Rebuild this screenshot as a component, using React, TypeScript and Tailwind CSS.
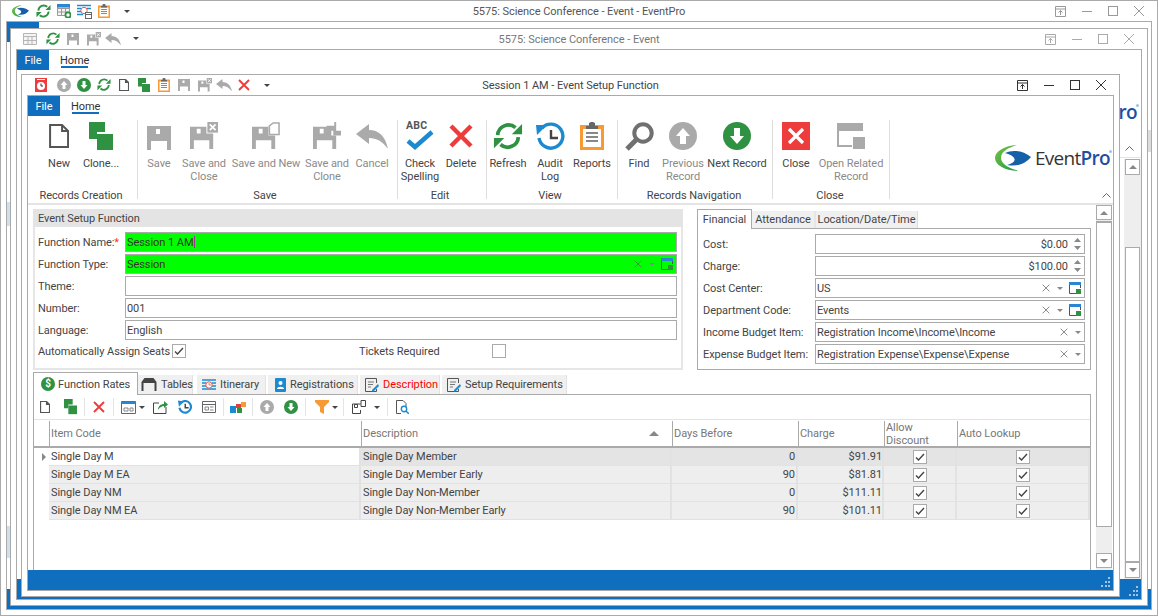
import type { ReactNode } from "react";

const GRAY = "#aaaaaa";
const GREEN = "#2f9142";
const RED = "#ee3b3b";
const ORANGE = "#f79a36";
const BLUE = "#1c8ad0";

function Svg({ w, h = w, vb, children }: { w: number; h?: number; vb: string; children: ReactNode }) {
  return (
    <svg width={w} height={h} viewBox={vb} className="block shrink-0">
      {children}
    </svg>
  );
}

function Swoosh({ w }: { w: number }) {
  return (
    <Svg w={w} h={(w * 26) / 36} vb="0 0 36 26">
      <defs>
        <linearGradient id="swg" x1="0" y1="0" x2="1" y2="1">
          <stop offset="0" stopColor="#7cc242" />
          <stop offset="1" stopColor="#149a47" />
        </linearGradient>
      </defs>
      <path d="M22 0 C8 1 0 7 0 13 C0 20 10 26 25 26 C13 24 6 18 6 13 C6 7 12 3 22 0Z" fill="url(#swg)" />
      <path d="M10 8 C18 4 29 6 36 12 C31 18 24 22 12 20 C21 18 24 12 10 8Z" fill="#1560a8" />
    </Svg>
  );
}

function Logo() {
  return (
    <div className="flex items-center gap-[4px]">
      <Swoosh w={36} />
      <span className="relative text-[19px] leading-[26px] tracking-[-0.7px] text-[#333333] [font-family:'Open_Sans',sans-serif]">
        Event<span className="font-semibold text-[#1f4f9f]">Pro</span>
        <span className="absolute -right-[2px] top-[5px] size-[3px] rounded-full bg-[#9cc3e4]" />
      </span>
    </div>
  );
}

function NewDoc({ s = 24, c = "#555555" }: { s?: number; c?: string }) {
  return (
    <Svg w={s * 0.84} h={s} vb="0 0 20 24">
      <path d="M1 1H13L19 7V23H1Z M13 1V7H19" fill="#fff" stroke={c} strokeWidth={s > 16 ? 2 : 2.4} />
    </Svg>
  );
}

function Clone({ s = 24, c = GREEN }: { s?: number; c?: string }) {
  return (
    <Svg w={s} h={(s * 28) / 24} vb="0 0 24 28">
      <path d="M0 0H16V10H8V17H0Z" fill={c} />
      <rect x="8" y="12" width="16" height="16" fill={c} />
    </Svg>
  );
}

function Floppy({ s = 24, c = GRAY }: { s?: number; c?: string }) {
  return (
    <Svg w={s} vb="0 0 24 24">
      <path fillRule="evenodd" d="M0 0H24V24H0Z M9 3V8H13V3Z M4 15V24H20V15Z" fill={c} />
    </Svg>
  );
}

function FloppyX({ s = 28, c = GRAY }: { s?: number; c?: string }) {
  return (
    <Svg w={s} h={(s * 28) / 29} vb="0 0 29 28">
      <path fillRule="evenodd" d="M0 5H17V12H24V28H0Z M7 7V12H11V7Z M4 19V28H20V19Z" fill={c} />
      <rect x="18" y="0" width="11" height="11" fill={c} />
      <path d="M20.5 2.5L26.5 8.5M26.5 2.5L20.5 8.5" stroke="#fff" strokeWidth="1.8" />
    </Svg>
  );
}

function FloppyNew({ s = 28 }: { s?: number }) {
  return (
    <Svg w={s} h={(s * 28) / 29} vb="0 0 29 28">
      <path fillRule="evenodd" d="M0 5H17V14H24V28H0Z M7 7V12H11V7Z M4 19V28H20V19Z" fill={GRAY} />
      <path d="M18 4L22 1H28V13H18Z" fill="#fff" stroke={GRAY} strokeWidth="1.6" />
    </Svg>
  );
}

function FloppyClone({ s = 28 }: { s?: number }) {
  return (
    <Svg w={s} h={(s * 28) / 29} vb="0 0 29 28">
      <path fillRule="evenodd" d="M0 5H19V14H24V28H0Z M7 7V12H11V7Z M4 19V28H20V19Z" fill={GRAY} />
      <path d="M14 4H22V0H24V9H29V14H21V9H14Z" fill={GRAY} />
    </Svg>
  );
}

function Back({ s = 32, c = GRAY }: { s?: number; c?: string }) {
  return (
    <Svg w={s} h={s * 0.78} vb="0 0 32 25">
      <path d="M0 10L13 0V6C24 6 30 14 32 25C27 18 21 14 13 14V20Z" fill={c} />
    </Svg>
  );
}

function Refresh({ s = 30 }: { s?: number }) {
  return (
    <Svg w={s} h={s * 0.94} vb="0 0 32 30">
      <path d="M5 14A11.5 11.5 0 0 1 24 6M27 16A11.5 11.5 0 0 1 8 24" fill="none" stroke={GREEN} strokeWidth="4" />
      <path d="M31 2V13H20ZM1 28V17H12Z" fill={GREEN} />
    </Svg>
  );
}

function Audit() {
  return (
    <Svg w={29} vb="0 0 29 29">
      <path d="M6 6A12 12 0 1 1 3 16" fill="none" stroke={BLUE} strokeWidth="3.4" />
      <path d="M0 3L11 3L1 13Z" fill={BLUE} />
      <path d="M15 8V16H22" fill="none" stroke="#444444" strokeWidth="2.4" />
    </Svg>
  );
}

function Clipboard({ w = 24, h = 28 }: { w?: number; h?: number }) {
  return (
    <Svg w={w} h={h} vb="0 0 24 28">
      <path fillRule="evenodd" d="M0 3H24V28H0Z M3 7V25H21V7Z" fill={ORANGE} />
      <path d="M6 4H9V1L11 0H13L15 1V4H18V7H6Z" fill="#666666" />
      <path d="M6 11H18M6 15H18M6 19H18" stroke="#888888" strokeWidth="2" />
    </Svg>
  );
}

function Magnifier() {
  return (
    <Svg w={29} vb="0 0 29 29">
      <circle cx="18" cy="11" r="8.7" fill="none" stroke="#707070" strokeWidth="4" />
      <path d="M11 18L2 27" stroke="#707070" strokeWidth="5" />
    </Svg>
  );
}

function CircleArrow({ s, c, up }: { s: number; c: string; up?: boolean }) {
  return (
    <Svg w={s} vb="0 0 28 28">
      <circle cx="14" cy="14" r="14" fill={c} />
      <path d={up ? "M14 6L21 14H17V22H11V14H7Z" : "M14 22L21 14H17V6H11V14H7Z"} fill="#fff" />
    </Svg>
  );
}

function Cross({ s, c = RED, sw = 3 }: { s: number; c?: string; sw?: number }) {
  return (
    <Svg w={s} vb="0 0 12 12">
      <path d="M1 1L11 11M11 1L1 11" stroke={c} strokeWidth={sw} />
    </Svg>
  );
}

function CheckSpelling() {
  return (
    <div className="relative h-[28px] w-[30px]">
      <span className="absolute left-[1px] -top-[3px] text-[10.5px] font-bold leading-[14px] tracking-[0.2px] text-[#555555]">ABC</span>
      <div className="absolute left-0 top-[8px]">
        <Svg w={30} h={20} vb="0 0 30 20">
          <path d="M3 11L10 17L27 2" fill="none" stroke={BLUE} strokeWidth="4.5" />
        </Svg>
      </div>
    </div>
  );
}

function CloseSquare() {
  return (
    <Svg w={28} vb="0 0 28 28">
      <rect width="28" height="28" fill={RED} />
      <path d="M7 7L21 21M21 7L7 21" stroke="#fff" strokeWidth="3.2" />
    </Svg>
  );
}

function OpenRelated() {
  return (
    <Svg w={28} h={26} vb="0 0 28 26">
      <path fillRule="evenodd" d="M0 0H26V8H24H2V22H15V24H0Z" fill={GRAY} />
      <rect x="16" y="14" width="12" height="12" fill={GRAY} />
    </Svg>
  );
}

function DropCaret() {
  return (
    <Svg w={6} h={3} vb="0 0 6 3">
      <path d="M0 0H6L3 3Z" fill="#444444" />
    </Svg>
  );
}

function ClearDrop({ lookup, c = "#777777" }: { lookup?: boolean; c?: string }) {
  return (
    <div className="flex items-center">
      <Cross s={8} c={c} sw={1.3} />
      <div className="ml-[7px]">
        <Svg w={6} h={3} vb="0 0 6 3">
          <path d="M0 0H6L3 3Z" fill="#888888" />
        </Svg>
      </div>
      {lookup && (
        <div className="ml-[6px]">
          <Svg w={12} vb="0 0 12 12">
            <path d="M.5 3V11.5H7" fill="none" stroke="#555555" />
            <path d="M11.5 3V6" stroke="#555555" />
            <rect width="12" height="3" fill="#2a86d3" />
            <rect x="7" y="7" width="5" height="5" fill={GREEN} />
          </Svg>
        </div>
      )}
    </div>
  );
}

function Spin() {
  return (
    <Svg w={7} h={12} vb="0 0 7 12">
      <path d="M0 4L3.5 0L7 4Z M0 8L3.5 12L7 8Z" fill="#888888" />
    </Svg>
  );
}

function WinControls({ c }: { c: string }) {
  return (
    <div className="flex items-center justify-end gap-[16px] pr-[13px]">
      <Svg w={11} vb="0 0 11 11">
        <path d="M.5.5H10.5V10.5H.5Z M.5 3H10.5 M5.5 9V4.5 M3.5 6.5L5.5 4.5L7.5 6.5" fill="none" stroke={c} />
      </Svg>
      <Svg w={10} vb="0 0 10 10">
        <path d="M0 5.5H10" stroke={c} />
      </Svg>
      <Svg w={10} vb="0 0 10 10">
        <rect x=".5" y=".5" width="9" height="9" fill="none" stroke={c} />
      </Svg>
      <Svg w={10} vb="0 0 10 10">
        <path d="M0 0L10 10M10 0L0 10" stroke={c} />
      </Svg>
    </div>
  );
}

function TitleBar({ left, title, titleColor, ctl }: { left: ReactNode; title: string; titleColor: string; ctl: string }) {
  return (
    <div className="grid h-[20px] shrink-0 grid-cols-[1fr_auto_1fr] items-center">
      <div className="flex items-center">{left}</div>
      <div className={"pt-px " + titleColor}>{title}</div>
      <WinControls c={ctl} />
    </div>
  );
}

function TabStrip() {
  return (
    <div className="flex h-[20px] shrink-0 items-start">
      <div className="flex h-[20px] w-[32px] items-center justify-center bg-[#106ebe] pt-px text-white">File</div>
      <div className="ml-[10px] flex h-[20px] flex-col items-center px-[1px] pt-px">
        <span className="leading-[19px] text-[#333333]">Home</span>
        <span className="-mt-[4px] h-[2px] w-[27px] bg-[#106ebe]" />
      </div>
    </div>
  );
}

function RibbonBtn({ w, icon, lines, off }: { w: string; icon: ReactNode; lines: string[]; off?: boolean }) {
  return (
    <div className={"flex h-[68px] flex-col items-center " + w}>
      <div className="flex h-[32px] items-center justify-center">{icon}</div>
      <div className={"mt-[5px] whitespace-nowrap text-center leading-[13px] " + (off ? "text-[#8a8a8a]" : "text-[#444444]")}>
        {lines.map((l) => (
          <div key={l}>{l}</div>
        ))}
      </div>
    </div>
  );
}

function RibbonGroup({ w, pr, label, children }: { w: string; pr: string; label: string; children: ReactNode }) {
  return (
    <>
      <div className={"flex shrink-0 flex-col " + w}>
        <div className="flex">{children}</div>
        <div className={"whitespace-nowrap pt-px text-center leading-[14px] text-[#444444] " + pr}>{label}</div>
      </div>
      <div className="h-[79px] w-px shrink-0 bg-[#dddddd]" />
    </>
  );
}

function Ribbon() {
  return (
    <div className="relative flex h-[87px] shrink-0 pt-[4px]">
      <RibbonGroup w="w-[109px] pl-[10px]" pr="-ml-[10px] pr-[3px]" label="Records Creation">
        <RibbonBtn w="w-[42px]" icon={<NewDoc s={24} />} lines={["New"]} />
        <RibbonBtn w="w-[42px]" icon={<Clone s={24} />} lines={["Clone..."]} />
      </RibbonGroup>
      <RibbonGroup w="w-[259px]" pr="pr-[5px]" label="Save">
        <RibbonBtn w="w-[42px]" off icon={<div className="mt-[4px]"><Floppy /></div>} lines={["Save"]} />
        <RibbonBtn w="w-[48px]" off icon={<FloppyX />} lines={["Save and", "Close"]} />
        <RibbonBtn w="w-[76px]" off icon={<FloppyNew />} lines={["Save and New"]} />
        <RibbonBtn w="w-[46px]" off icon={<FloppyClone />} lines={["Save and", "Clone"]} />
        <RibbonBtn w="w-[44px]" off icon={<Back />} lines={["Cancel"]} />
      </RibbonGroup>
      <RibbonGroup w="w-[88px]" pr="pr-[4px]" label="Edit">
        <RibbonBtn w="w-[44px]" icon={<CheckSpelling />} lines={["Check", "Spelling"]} />
        <RibbonBtn w="w-[38px]" icon={<Cross s={24} sw={2.2} />} lines={["Delete"]} />
      </RibbonGroup>
      <RibbonGroup w="w-[130px]" pr="pr-[4px]" label="View">
        <RibbonBtn w="w-[42px]" icon={<Refresh />} lines={["Refresh"]} />
        <RibbonBtn w="w-[42px]" icon={<Audit />} lines={["Audit", "Log"]} />
        <RibbonBtn w="w-[42px]" icon={<Clipboard />} lines={["Reports"]} />
      </RibbonGroup>
      <RibbonGroup w="w-[154px]" pr="pr-[2px]" label="Records Navigation">
        <RibbonBtn w="w-[42px]" icon={<Magnifier />} lines={["Find"]} />
        <RibbonBtn w="w-[46px]" off icon={<CircleArrow s={28} c={GRAY} up />} lines={["Previous", "Record"]} />
        <RibbonBtn w="w-[62px]" icon={<CircleArrow s={28} c={GREEN} />} lines={["Next Record"]} />
      </RibbonGroup>
      <RibbonGroup w="w-[116px]" pr="pr-[2px]" label="Close">
        <RibbonBtn w="w-[46px]" icon={<CloseSquare />} lines={["Close"]} />
        <RibbonBtn w="w-[64px]" off icon={<OpenRelated />} lines={["Open Related", "Record"]} />
      </RibbonGroup>
      <div className="absolute right-[3px] top-[29px]">
        <Logo />
      </div>
      <div className="absolute right-[2px] bottom-[5px]">
        <Chevron />
      </div>
    </div>
  );
}

function Chevron() {
  return (
    <Svg w={9} h={5} vb="0 0 9 5">
      <path d="M.5 4.5L4.5 .5L8.5 4.5" fill="none" stroke="#666666" />
    </Svg>
  );
}

function Field({ value, green, right, align, caret }: { value?: string; green?: boolean; right?: ReactNode; align?: boolean; caret?: boolean }) {
  return (
    <div
      className={
        "flex h-[20px] min-w-0 flex-1 items-center border border-[#aaaaaa] px-[1px] " +
        (green ? "bg-[#00ff00] text-[#333333]" : "bg-white text-[#444444]")
      }
    >
      <span className={"truncate pt-px " + (align ? "flex-1 text-right" : caret ? "" : "flex-1")}>{value}</span>
      {caret && <span className="ml-[1px] h-[12px] w-px bg-[#a02fa0]" />}
      {right && <div className="ml-[6px] flex items-center pr-[2px]">{right}</div>}
    </div>
  );
}

function Check({ on }: { on?: boolean }) {
  return (
    <div className="flex size-[14px] shrink-0 items-center justify-center border border-[#aaaaaa] bg-white">
      {on && (
        <Svg w={10} h={8} vb="0 0 10 8">
          <path d="M1 4.5L3.5 7L9 1" fill="none" stroke="#444444" strokeWidth="1.4" />
        </Svg>
      )}
    </div>
  );
}

function SetupGroup() {
  const rows: [string, ReactNode][] = [
    [
      "Function Name:",
      <Field key="a" green caret value="Session 1 AM" />,
    ],
    [
      "Function Type:",
      <Field key="b" green value="Session" right={<ClearDrop lookup c="#3d8a3d" />} />,
    ],
    ["Theme:", <Field key="c" />],
    ["Number:", <Field key="d" value="001" />],
    ["Language:", <Field key="e" value="English" />],
  ];
  return (
    <div className="h-[161px] w-[650px] shrink-0 border-2 border-t-0 border-[#e6e6e6]">
      <div className="-mx-[2px] flex h-[18px] items-center bg-[#e4e4e4] pt-px pl-[5px] text-[#444444]">Event Setup Function</div>
      <div className="flex flex-col gap-[2px] pt-[5px] pr-[4px] pl-[3px]">
        {rows.map(([label, field], i) => (
          <div key={label} className="flex items-center">
            <span className="w-[87px] shrink-0 whitespace-nowrap pt-px text-[#444444]">
              {label}
              {i === 0 && <span className="text-[#ee3b3b]">*</span>}
            </span>
            {field}
          </div>
        ))}
        <div className="flex h-[18px] items-center text-[#444444]">
          <span className="w-[134px] shrink-0 whitespace-nowrap pt-px">Automatically Assign Seats</span>
          <Check on />
          <span className="ml-[173px] w-[133px] shrink-0 pt-px">Tickets Required</span>
          <Check />
        </div>
      </div>
    </div>
  );
}

function FinancialPanel() {
  const rows: [string, ReactNode][] = [
    ["Cost:", <Field key="a" value="$0.00" align right={<Spin />} />],
    ["Charge:", <Field key="b" value="$100.00" align right={<Spin />} />],
    ["Cost Center:", <Field key="c" value="US" right={<ClearDrop lookup />} />],
    ["Department Code:", <Field key="d" value="Events" right={<ClearDrop lookup />} />],
    ["Income Budget Item:", <Field key="e" value="Registration Income\Income\Income" right={<ClearDrop />} />],
    ["Expense Budget Item:", <Field key="f" value="Registration Expense\Expense\Expense" right={<ClearDrop />} />],
  ];
  return (
    <div className="ml-[14px] flex w-[394px] shrink-0 flex-col">
      <div className="flex h-[19px] items-end text-[#444444]">
        <div className="z-10 -mb-px flex h-[20px] w-[55px] items-center justify-center border border-b-0 border-[#aaaaaa] bg-white">Financial</div>
        <div className="flex h-[17px] w-[64px] items-center justify-center border-r-2 border-[#e6e6e6] bg-[#f0f0f0]">Attendance</div>
        <div className="flex h-[17px] w-[102px] items-center justify-center border-r border-[#dddddd] bg-[#f0f0f0]">Location/Date/Time</div>
      </div>
      <div className="flex h-[142px] flex-col gap-[2px] border border-[#aaaaaa] px-[5px] pt-[5px]">
        {rows.map(([label, field]) => (
          <div key={label} className="flex items-center">
            <span className="w-[112px] shrink-0 whitespace-nowrap pt-px text-[#444444]">{label}</span>
            {field}
          </div>
        ))}
      </div>
    </div>
  );
}

function DocPen() {
  return (
    <Svg w={14} vb="0 0 14 14">
      <path d="M.5.5H11.5V5M11.5 11V13.5H.5V.5" fill="none" stroke="#555555" />
      <path d="M3 4H9M3 6.5H8M3 9H6" stroke="#777777" />
      <path d="M7 12L13 6L14 8L8.5 13.5H7Z" fill={BLUE} />
    </Svg>
  );
}

function ItinIcon({ s = 14 }: { s?: number }) {
  return (
    <Svg w={s} vb="0 0 14 14">
      <path d="M0 2H14M0 5H4M0 8H4M0 11H14M10 5H14M10 8H14" stroke={BLUE} strokeWidth="1.4" />
      <circle cx="7" cy="7" r="3.2" fill="#fff" stroke="#e8594f" />
      <path d="M7 5V7H9" fill="none" stroke="#e8594f" strokeWidth=".8" />
    </Svg>
  );
}

function GridGear() {
  return (
    <Svg w={14} h={14} vb="0 0 14 14">
      <path d="M.5.5H12.5V11.5H.5Z M.5 4.5H12.5 M4.5 4.5V11.5 M8.5 4.5V11.5 M.5 8H12.5" fill="#f4f4f4" stroke="#999999" />
      <rect x="0" y="0" width="13" height="3.5" fill="#2a86d3" />
      <circle cx="11" cy="11" r="2.6" fill="#fff" stroke={GREEN} strokeWidth="1.8" />
    </Svg>
  );
}

function ItinCal() {
  return (
    <Svg w={15} h={15} vb="0 0 15 15">
      <path d="M0 1.5H14M0 4.5H4M0 7.5H4M0 10.5H6M10 4.5H14" stroke={BLUE} strokeWidth="1.4" />
      <circle cx="7" cy="6.5" r="3.2" fill="#fff" stroke="#e8594f" />
      <rect x="8.5" y="8.5" width="6" height="6" fill="#fff" stroke="#666666" />
      <path d="M8.5 10.5H14.5" stroke="#666666" />
    </Svg>
  );
}

function BottomTab({ w, ml, icon, label, red }: { w: string; ml: string; icon: ReactNode; label: string; red?: boolean }) {
  return (
    <div className={"flex h-[19px] shrink-0 items-center gap-[4px] border-r border-[#e2e2e2] bg-[#f0f0f0] pl-[5px] " + w + " " + ml}>
      {icon}
      <span className={"whitespace-nowrap " + (red ? "text-[#ff0000]" : "text-[#444444]")}>{label}</span>
    </div>
  );
}

function TabsRow() {
  return (
    <div className="mt-[2px] flex h-[22px] shrink-0 items-end">
      <div className="z-10 -mb-px flex h-[23px] w-[105px] shrink-0 items-center gap-[3px] whitespace-nowrap border border-b-0 border-[#aaaaaa] bg-white pl-[7px] text-[#444444]">
        <span className="flex size-[14px] items-center justify-center rounded-full bg-[#2f9142] text-[10px] font-bold leading-none text-white">$</span>
        <span className="pt-px">Function Rates</span>
      </div>
      <BottomTab
        w="w-[55px]"
        ml="ml-0"
        icon={
          <div className="-ml-[2px]">
            <Svg w={16} h={13} vb="0 0 15 13">
              <path d="M3 0H12L15 4V13H13V5H2V13H0V4Z" fill="#444444" />
            </Svg>
          </div>
        }
        label="Tables"
      />
      <BottomTab w="w-[69px]" ml="ml-[4px]" icon={<ItinIcon />} label="Itinerary" />
      <BottomTab
        w="w-[90px]"
        ml="ml-[2px]"
        icon={
          <div className="ml-[2px]">
            <Svg w={11} h={14} vb="0 0 11 14">
              <rect width="11" height="14" rx="1" fill={BLUE} />
              <circle cx="5.5" cy="5" r="2" fill="#fff" />
              <path d="M2 11C2 8 9 8 9 11Z" fill="#fff" />
            </Svg>
          </div>
        }
        label="Registrations"
      />
      <BottomTab w="w-[80px]" ml="ml-[2px]" icon={<DocPen />} label="Description" red />
      <BottomTab w="w-[125px]" ml="ml-[2px]" icon={<DocPen />} label="Setup Requirements" />
    </div>
  );
}

function Sep({ ml }: { ml: string }) {
  return <div className={"h-[18px] w-px shrink-0 bg-[#e4e4e4] " + ml} />;
}

function GridToolbar() {
  return (
    <div className="flex h-[25px] shrink-0 items-center border-b border-[#e3e3e3]">
      <div className="ml-[6px]"><NewDoc s={12} /></div>
      <div className="ml-[14px]"><Clone s={13} /></div>
      <Sep ml="ml-[7px]" />
      <div className="ml-[8px]"><Cross s={12} sw={1.9} /></div>
      <Sep ml="ml-[8px]" />
      <div className="ml-[7px]">
        <Svg w={15} h={13} vb="0 0 15 13">
          <path d="M.5.5H14.5V12.5H.5Z" fill="none" stroke="#666666" />
          <rect x=".5" y=".5" width="14" height="2.5" fill="#2a86d3" />
          <path d="M3 7H7V10H3ZM9 7H12V10H9Z" fill="none" stroke="#888888" />
        </Svg>
      </div>
      <div className="ml-[3px]"><DropCaret /></div>
      <div className="ml-[8px]">
        <Svg w={15} h={13} vb="0 0 15 13">
          <path d="M6 2H.5V12.5H13V6" fill="none" stroke="#444444" />
          <path d="M5 9C5 5 8 3 11 3V0L15 3.5L11 7V5C9 5 7 6 5 9Z" fill={GREEN} />
        </Svg>
      </div>
      <div className="ml-[10px]">
        <Svg w={14} vb="0 0 29 29">
          <path d="M6 6A12 12 0 1 1 3 16" fill="none" stroke={BLUE} strokeWidth="4.5" />
          <path d="M0 1L12 3L2 14Z" fill={BLUE} />
          <path d="M15 8V16H22" fill="none" stroke="#444444" strokeWidth="3" />
        </Svg>
      </div>
      <div className="ml-[10px]">
        <Svg w={14} h={12} vb="0 0 14 12">
          <path d="M.5.5H13.5V11.5H.5Z M.5 3.5H13.5" fill="none" stroke="#666666" />
          <path d="M3 6H6.5V9H3ZM8 6H11.5M8 9H11.5" fill="none" stroke="#888888" />
        </Svg>
      </div>
      <Sep ml="ml-[7px]" />
      <div className="ml-[6px]">
        <Svg w={16} h={11} vb="0 0 16 11">
          <path d="M0 4H6V11H0Z" fill={BLUE} />
          <path d="M6 2H11V6H6Z" fill="#d9433a" />
          <path d="M11 0H16V5H11Z" fill={ORANGE} />
          <path d="M7 6H12V11H7Z" fill={GREEN} />
        </Svg>
      </div>
      <Sep ml="ml-[6px]" />
      <div className="ml-[7px]"><CircleArrow s={14} c={GRAY} up /></div>
      <div className="ml-[10px]"><CircleArrow s={14} c={GREEN} /></div>
      <Sep ml="ml-[7px]" />
      <div className="ml-[9px]">
        <Svg w={14} vb="0 0 14 14">
          <path d="M0 0H14V2L9 7V14L5 12V7L0 2Z" fill={ORANGE} />
        </Svg>
      </div>
      <div className="ml-[3px]"><DropCaret /></div>
      <Sep ml="ml-[5px]" />
      <div className="ml-[8px]">
        <Svg w={14} vb="0 0 14 14">
          <path d="M.5 4V13.5H8.5V10M8.5 4H.5" fill="none" stroke="#444444" />
          <path d="M2.5 4.5H5.5V7.5H2.5Z M9 .5H13.5V6.5H9Z" fill="none" stroke="#444444" />
        </Svg>
      </div>
      <div className="ml-[8px]"><DropCaret /></div>
      <Sep ml="ml-[7px]" />
      <div className="ml-[8px]">
        <Svg w={13} h={14} vb="0 0 13 14">
          <path d="M.5.5H7L10 3.5V7M5 13.5H.5V.5" fill="none" stroke="#555555" />
          <circle cx="8" cy="9" r="2.7" fill="none" stroke={BLUE} strokeWidth="1.4" />
          <path d="M10 11L13 14" stroke={BLUE} strokeWidth="1.4" />
        </Svg>
      </div>
    </div>
  );
}

const rates = [
  ["Single Day M", "Single Day Member", "0", "$91.91"],
  ["Single Day M EA", "Single Day Member Early", "90", "$81.81"],
  ["Single Day NM", "Single Day Non-Member", "0", "$111.11"],
  ["Single Day NM EA", "Single Day Non-Member Early", "90", "$101.11"],
];

const COLS = "grid grid-cols-[15px_312px_311px_126px_86px_73px_133px]";

function HeadCell({ children, cls = "" }: { children: ReactNode; cls?: string }) {
  return (
    <div className={"flex items-center self-stretch leading-[13px] text-[#777777] " + cls}>
      <div className="flex h-[25px] w-full items-center border-l border-[#aaaaaa] pl-[1px]">{children}</div>
    </div>
  );
}

function RatesGrid() {
  return (
    <div className="min-h-0 flex-1 text-[#444444]">
      <div className={COLS + " h-[28px] border-b-2 border-[#aaaaaa]"}>
        <div />
        <HeadCell>Item Code</HeadCell>
        <HeadCell>
          <span className="flex-1">Description</span>
          <span className="mr-[13px] size-0 border-x-[5px] border-b-[5px] border-x-transparent border-b-[#888888]" />
        </HeadCell>
        <HeadCell>Days Before</HeadCell>
        <HeadCell>Charge</HeadCell>
        <HeadCell>
          <span className="pt-px">
            Allow
            <br />
            Discount
          </span>
        </HeadCell>
        <HeadCell>Auto Lookup</HeadCell>
      </div>
      {rates.map((r, i) => {
        const bg = i === 0 ? "bg-[#e4e4e4]" : "bg-[#eeeeee]";
        const cell = "flex h-[18px] items-center border-r-2 border-b-[1px] border-[#e2e2e2] ";
        return (
          <div key={r[0]} className={COLS}>
            <div className="flex h-[18px] items-center justify-center bg-white">
              {i === 0 && <span className="ml-[4px] size-0 border-y-[4px] border-l-[4px] border-y-transparent border-l-[#888888]" />}
            </div>
            <div className={cell + "pl-[2px] " + (i === 0 ? "bg-white" : bg)}>{r[0]}</div>
            <div className={cell + "pl-[2px] " + bg}>{r[1]}</div>
            <div className={cell + "justify-end pr-[1px] " + bg}>{r[2]}</div>
            <div className={cell + "justify-end " + bg}>{r[3]}</div>
            <div className={cell + "justify-center " + bg}><Check on /></div>
            <div className={cell + "justify-center " + bg}><Check on /></div>
          </div>
        );
      })}
    </div>
  );
}

function ScrollBar() {
  return (
    <div className="flex w-[16px] shrink-0 flex-col bg-[#eeeeee]">
      <div className="flex h-[15px] items-center justify-center border border-[#aaaaaa] bg-white">
        <span className="size-0 border-x-[4px] border-b-[4px] border-x-transparent border-b-[#888888]" />
      </div>
      <div className="mt-[1px] h-[306px] border border-t-2 border-[#aaaaaa] bg-white" />
      <div className="flex-1" />
      <div className="flex h-[15px] items-center justify-center border border-[#aaaaaa] bg-white">
        <span className="size-0 border-x-[4px] border-t-[4px] border-x-transparent border-t-[#888888]" />
      </div>
      <div className="h-[2px]" />
    </div>
  );
}

function StatusBar({ h = "h-[20px]" }: { h?: string }) {
  return (
    <div className={"flex shrink-0 items-end justify-end bg-[#106ebe] pr-[3px] pb-[3px] " + h}>
      <Svg w={10} h={10} vb="0 0 10 10">
        <path d="M8 0h2v2H8zM5 4h2v2H5zM8 4h2v2H8zM1 8h2v2H1zM5 8h2v2H5zM8 8h2v2H8z" fill="#9dc3e6" />
      </Svg>
    </div>
  );
}

function SessionWindow() {
  return (
    <div className="absolute left-[20px] top-[73px] flex h-[523px] w-[1099px] flex-col border border-[#aaaaaa] bg-white">
      <TitleBar
        title="Session 1 AM - Event Setup Function"
        titleColor="text-[#444444]"
        ctl="#333333"
        left={
          <>
            <div className="ml-[13px]">
              <Svg w={12} h={14} vb="0 0 12 14">
                <rect width="12" height="14" fill={RED} />
                <circle cx="6" cy="8" r="4" fill="#fff" />
                <path d="M6 5.5V8H8" fill="none" stroke="#333333" />
                <path d="M2 1.5H10" stroke="#fff" />
              </Svg>
            </div>
            <div className="ml-[10px]"><CircleArrow s={14} c={GRAY} up /></div>
            <div className="ml-[6px]"><CircleArrow s={14} c={GREEN} /></div>
            <div className="ml-[6px]"><Refresh s={14} /></div>
            <div className="ml-[8px]"><NewDoc s={12} /></div>
            <div className="ml-[9px]"><Clone s={12} /></div>
            <div className="ml-[8px]"><Clipboard w={12} h={14} /></div>
            <div className="ml-[8px]"><Floppy s={12} /></div>
            <div className="ml-[8px]"><FloppyX s={14} /></div>
            <div className="ml-[4px]"><Back s={16} /></div>
            <div className="ml-[6px]"><Cross s={12} sw={1.9} /></div>
            <div className="ml-[14px]"><DropCaret /></div>
          </>
        }
      />
      <div className="mx-[5px] mb-[5px] flex min-h-0 flex-1 flex-col border border-[#aaaaaa] bg-white">
        <TabStrip />
        <Ribbon />
        <div className="h-[2px] shrink-0 bg-[#e4e4e4]" />
        <div className="flex min-h-0 flex-1">
          <div className="flex w-[1068px] shrink-0 flex-col pt-[4px] pl-[5px]">
            <div className="flex shrink-0">
              <SetupGroup />
              <FinancialPanel />
            </div>
            <TabsRow />
            <div className="flex min-h-0 w-[1058px] flex-1 flex-col border-x border-t border-[#aaaaaa]">
              <GridToolbar />
              <RatesGrid />
            </div>
          </div>
          <ScrollBar />
        </div>
        <StatusBar />
      </div>
    </div>
  );
}

function EventWindow() {
  return (
    <div className="absolute left-[9px] top-[27px] flex h-[578px] w-[1138px] flex-col border border-[#aaaaaa] bg-white">
      <TitleBar
        title="5575: Science Conference - Event"
        titleColor="text-[#777777]"
        ctl="#aaaaaa"
        left={
          <>
            <div className="ml-[12px]">
              <Svg w={14} h={12} vb="0 0 14 12">
                <path d="M.5.5H13.5V11.5H.5Z M.5 3.5H13.5 M5 3.5V11.5 M9 3.5V11.5 M.5 7.5H13.5" fill="#f4f4f4" stroke="#b5b5b5" />
              </Svg>
            </div>
            <div className="ml-[9px]"><Refresh s={14} /></div>
            <div className="ml-[7px]"><Floppy s={12} /></div>
            <div className="ml-[8px]"><FloppyX s={14} /></div>
            <div className="ml-[4px]"><Back s={16} /></div>
            <div className="ml-[12px]"><DropCaret /></div>
          </>
        }
      />
      <div className="mx-[5px] mb-[5px] flex min-h-0 flex-1 flex-col border border-[#aaaaaa] bg-white">
        <TabStrip />
        <div className="relative flex-1">
          <div className="absolute right-[4px] top-[29px]">
            <Logo />
          </div>
          <div className="absolute right-[7px] top-[76px]"><Chevron /></div>
          <div className="absolute top-[87px] right-0 h-px w-[22px] bg-[#e4e4e4]" />
          <div className="absolute top-[89px] right-0 flex h-[420px] w-[17px] flex-col bg-[#eeeeee] px-px">
            <div className="flex h-[16px] items-center justify-center border border-[#aaaaaa] bg-white">
              <span className="size-0 border-x-[4px] border-b-[4px] border-x-transparent border-b-[#888888]" />
            </div>
            <div className="mt-[72px] h-[315px] border border-[#aaaaaa] bg-white" />
            <div className="flex h-[16px] items-center justify-center border border-[#aaaaaa] bg-white">
              <span className="size-0 border-x-[4px] border-t-[4px] border-x-transparent border-t-[#888888]" />
            </div>
          </div>
        </div>
        <StatusBar />
      </div>
    </div>
  );
}

export default function App() {
  return (
    <div className="relative h-[616px] w-[1158px] overflow-hidden border border-[#aaaaaa] bg-white text-[11px] leading-[14px] tracking-[-0.06px] [font-family:Roboto,sans-serif]">
      <TitleBar
        title="5575: Science Conference - Event - EventPro"
        titleColor="text-[#555555]"
        ctl="#999999"
        left={
          <>
            <div className="ml-[11px]"><Swoosh w={17} /></div>
            <div className="ml-[7px]"><Refresh s={15} /></div>
            <div className="ml-[6px]"><GridGear /></div>
            <div className="ml-[6px]"><ItinCal /></div>
            <div className="ml-[6px]"><Clipboard w={12} h={14} /></div>
            <div className="ml-[14px]"><DropCaret /></div>
          </>
        }
      />
      <div className="absolute left-[5px] top-[20px] flex h-[589px] w-[1146px] flex-col border border-[#aaaaaa] bg-white">
        <div className="flex h-[20px] w-[32px] shrink-0 bg-[#106ebe]" />
        <div className="mt-[484px] h-[32px] w-[3px] bg-[#cfe0ef]" />
        <div className="absolute right-0 top-[108px] h-[22px] w-[3px] bg-[#dddddd]" />
        <div className="absolute left-0 top-[180px] h-[24px] w-[3px] bg-[#cfe0ef]" />
        <div className="absolute inset-x-0 bottom-0">
          <StatusBar />
        </div>
      </div>
      <EventWindow />
      <SessionWindow />
    </div>
  );
}
